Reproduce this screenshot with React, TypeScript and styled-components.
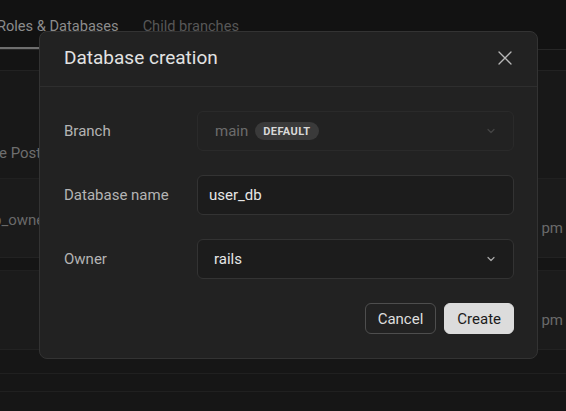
import React from "react";
import styled, { createGlobalStyle } from "styled-components";

const GlobalStyle = createGlobalStyle`
  html, body { margin: 0; padding: 0; background: #141414; }
  body { font-family: Roboto, "Noto Sans", "Liberation Sans", sans-serif; -webkit-font-smoothing: antialiased; }
  * { box-sizing: border-box; }
`;

const Page = styled.div`
  position: relative;
  width: 566px;
  height: 411px;
  overflow: hidden;
  background: #151515;
  display: flex;
  flex-direction: column;
  & > * { flex-shrink: 0; }
`;

const TabBar = styled.div`
  height: 50px;
  background: #121212;
  border-bottom: 1px solid #262626;
  display: flex;
  gap: 0;
  margin-left: -15px;
`;

const Tab = styled.div<{ $active?: boolean }>`
  height: 49px;
  padding: 16px 12px 0;
  font-size: 14.6px;
  line-height: 20px;
  color: ${(p) => (p.$active ? "#8c8c8c" : "#575757")};
  border-bottom: 2px solid ${(p) => (p.$active ? "#6e6e6e" : "transparent")};
  white-space: nowrap;
`;

const Strip = styled.div`
  height: 21px;
  background: #141414;
  border-bottom: 1px solid #222222;
`;

const Intro = styled.div`
  height: 108px;
  background: #181818;
  border-bottom: 1px solid #202020;
  display: flex;
  align-items: flex-end;
  padding-bottom: 16px;
  font-size: 15px;
  color: #6e6e6e;
  white-space: nowrap;
  margin-left: -1px;
`;

const Row = styled.div`
  height: 79px;
  background: #1b1b1b;
  border-bottom: 1px solid #222222;
  display: flex;
  align-items: center;
  justify-content: space-between;
  font-size: 15px;
  color: #6a6a6a;
  white-space: nowrap;
`;

const RowName = styled.span`
  margin-left: -7px;
  margin-top: 3px;
`;

const RowTime = styled.span`
  margin-right: 3px;
  margin-top: 20px;
`;

const Band = styled.div<{ $h: number; $bg: string }>`
  height: ${(p) => p.$h}px;
  background: ${(p) => p.$bg};
  border-bottom: 1px solid #202020;
`;

const Modal = styled.div`
  position: absolute;
  left: 39px;
  top: 31px;
  width: 499px;
  background: #222222;
  border: 1px solid #333333;
  border-radius: 8px;
  display: flex;
  flex-direction: column;
`;

const ModalHeader = styled.div`
  height: 55px;
  border-bottom: 1px solid #2e2e2e;
  display: flex;
  align-items: center;
  justify-content: space-between;
  padding: 0 24px 3px 24px;
`;

const Title = styled.h2`
  margin: 0;
  font-size: 19px;
  font-weight: 400;
  color: #e2e2e2;
`;

const CloseButton = styled.button`
  width: 18px;
  height: 18px;
  padding: 0;
  margin-right: -1px;
  border: none;
  background: transparent;
  color: #b8b8b8;
  display: flex;
  align-items: center;
  justify-content: center;
`;

const Body = styled.div`
  padding: 24px 23px 24px 24px;
  display: grid;
  grid-template-columns: 133px 1fr;
  row-gap: 24px;
  align-items: center;
`;

const Label = styled.label`
  font-size: 15px;
  color: #b4b4b4;
`;

const Field = styled.div<{ $disabled?: boolean; $pad: number; $bg: string }>`
  height: 40px;
  border: 1px solid ${(p) => (p.$disabled ? "#2a2a2a" : "#333333")};
  border-radius: 6px;
  background: ${(p) => p.$bg};
  display: flex;
  align-items: center;
  padding: 0 17px 0 ${(p) => p.$pad}px;
  font-size: 15px;
  color: ${(p) => (p.$disabled ? "#6c6c6c" : "#e6e6e6")};
  gap: 7px;
`;

const Grow = styled.span`
  flex: 1;
`;

const Badge = styled.span`
  height: 18px;
  padding: 0 8px;
  border-radius: 9px;
  background: #3a3a3a;
  color: #d8d8d8;
  font-size: 11px;
  font-weight: 700;
  letter-spacing: 0.4px;
  display: inline-flex;
  align-items: center;
`;

const Actions = styled.div`
  grid-column: 1 / span 2;
  display: flex;
  justify-content: flex-end;
  gap: 8px;
`;

const Button = styled.button<{ $primary?: boolean }>`
  height: 31px;
  padding: 0 12px;
  border-radius: 6px;
  font-family: inherit;
  font-size: 15px;
  border: 1px solid ${(p) => (p.$primary ? "#dcdcdc" : "#4e4e4e")};
  background: ${(p) => (p.$primary ? "#dcdcdc" : "transparent")};
  color: ${(p) => (p.$primary ? "#1b1b1b" : "#dedede")};
`;

const Chevron = ({ color }: { color: string }) => (
  <svg width="10" height="10" viewBox="0 0 10 10" fill="none">
    <path d="M2 3.5 L5 6.5 L8 3.5" stroke={color} strokeWidth="1.2" strokeLinecap="round" strokeLinejoin="round" />
  </svg>
);

export default function App() {
  return (
    <>
      <GlobalStyle />
      <Page>
        <TabBar>
          <Tab $active>Roles &amp; Databases</Tab>
          <Tab>Child branches</Tab>
        </TabBar>
        <Strip />
        <Intro>e Postgres roles and databases for this branch</Intro>
        <Row>
          <RowName>b_owner</RowName>
          <RowTime>pm</RowTime>
        </Row>
        <Band $h={13} $bg="#151515" />
        <Row>
          <RowName />
          <RowTime>pm</RowTime>
        </Row>
        <Band $h={24} $bg="#161616" />
        <Band $h={18} $bg="#161616" />
        <Band $h={40} $bg="#161616" />

        <Modal role="dialog">
          <ModalHeader>
            <Title>Database creation</Title>
            <CloseButton aria-label="Close">
              <svg width="16" height="16" viewBox="0 0 16 16" fill="none">
                <path d="M2 2 L14 14 M14 2 L2 14" stroke="currentColor" strokeWidth="1.3" strokeLinecap="round" />
              </svg>
            </CloseButton>
          </ModalHeader>
          <Body>
            <Label>Branch</Label>
            <Field $disabled $pad={17} $bg="#222222">
              <span>main</span>
              <Badge>DEFAULT</Badge>
              <Grow />
              <Chevron color="#454545" />
            </Field>
            <Label>Database name</Label>
            <Field $pad={11} $bg="#1c1c1c">
              <Grow>user_db</Grow>
            </Field>
            <Label>Owner</Label>
            <Field $pad={16} $bg="#1c1c1c">
              <Grow>rails</Grow>
              <Chevron color="#a8a8a8" />
            </Field>
            <Actions>
              <Button>Cancel</Button>
              <Button $primary>Create</Button>
            </Actions>
          </Body>
        </Modal>
      </Page>
    </>
  );
}
